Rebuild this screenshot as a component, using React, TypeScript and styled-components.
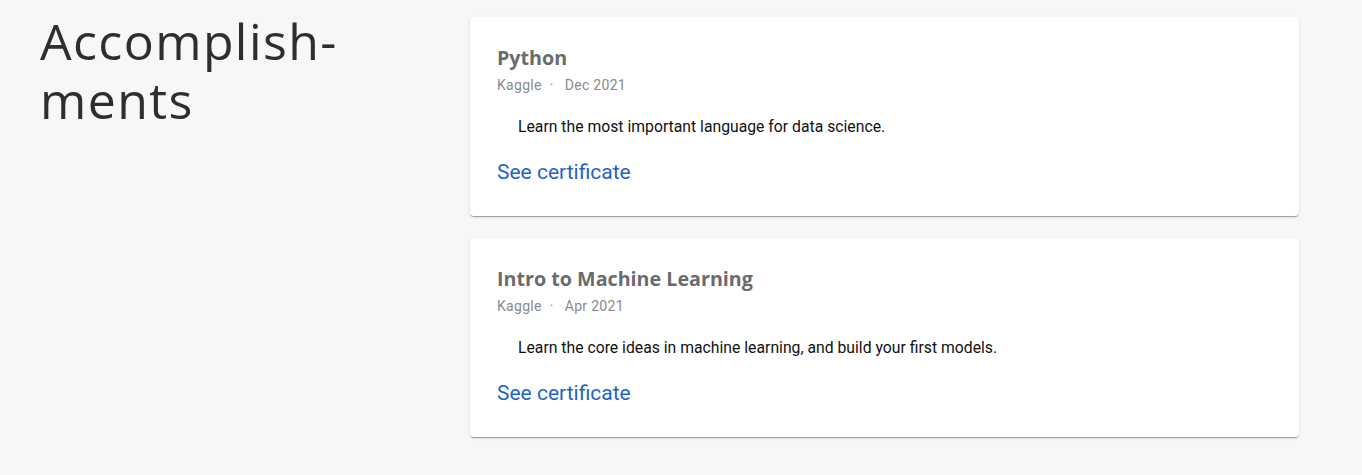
import React from "react";
import styled, { createGlobalStyle } from "styled-components";

const GlobalStyle = createGlobalStyle`
  html, body { margin: 0; padding: 0; background: #f7f7f7; }
  body { font-family: Roboto, "Liberation Sans", sans-serif; }
`;

const Page = styled.section`
  display: grid;
  grid-template-columns: 430px 829px;
  align-items: start;
  padding: 17px 0 30px 40px;
  box-sizing: border-box;
  width: 1362px;
`;

const Heading = styled.h2`
  margin: -5px 0 0;
  font-family: "Open Sans", sans-serif;
  font-weight: 400;
  font-size: 50px;
  line-height: 59px;
  letter-spacing: 1.4px;
  color: #2e2e2e;
`;

const CardList = styled.div`
  display: flex;
  flex-direction: column;
  gap: 22px;
`;

const Card = styled.article`
  background: #fff;
  border-radius: 4px;
  box-shadow: 0 2px 1px -1px rgba(0, 0, 0, 0.2), 0 1px 1px 0 rgba(0, 0, 0, 0.14),
    0 1px 3px 0 rgba(0, 0, 0, 0.12);
  padding: 29px 27px 30px;
  height: 199px;
  box-sizing: border-box;
`;

const Title = styled.h3`
  margin: 0;
  font-family: "Open Sans", sans-serif;
  font-weight: 700;
  font-size: 19.7px;
  line-height: 24px;
  color: #6b6b6b;
`;

const Meta = styled.div`
  margin-top: 6px;
  font-size: 14px;
  line-height: 18px;
  letter-spacing: 0.3px;
  color: #8a8a8a;
  display: flex;
  gap: 8px;
`;

const Dot = styled.span`
  padding-right: 3px;
`;

const Description = styled.p`
  margin: 23px 0 0 21px;
  font-size: 15.75px;
  line-height: 20px;
  color: #111;
`;

const Link = styled.a`
  display: inline-block;
  margin-top: 23px;
  font-size: 21px;
  line-height: 24px;
  color: #1f64c7;
  text-decoration: none;
`;

const items = [
  {
    title: "Python",
    org: "Kaggle",
    date: "Dec 2021",
    desc: "Learn the most important language for data science.",
  },
  {
    title: "Intro to Machine Learning",
    org: "Kaggle",
    date: "Apr 2021",
    desc: "Learn the core ideas in machine learning, and build your first models.",
  },
];

export default function App() {
  return (
    <>
      <GlobalStyle />
      <Page>
        <Heading>
          Accomplish-
          <br />
          ments
        </Heading>
        <CardList>
          {items.map((it) => (
            <Card key={it.title}>
              <Title>{it.title}</Title>
              <Meta>
                <span>{it.org}</span>
                <Dot>·</Dot>
                <span>{it.date}</span>
              </Meta>
              <Description>{it.desc}</Description>
              <Link href="#">See certificate</Link>
            </Card>
          ))}
        </CardList>
      </Page>
    </>
  );
}
